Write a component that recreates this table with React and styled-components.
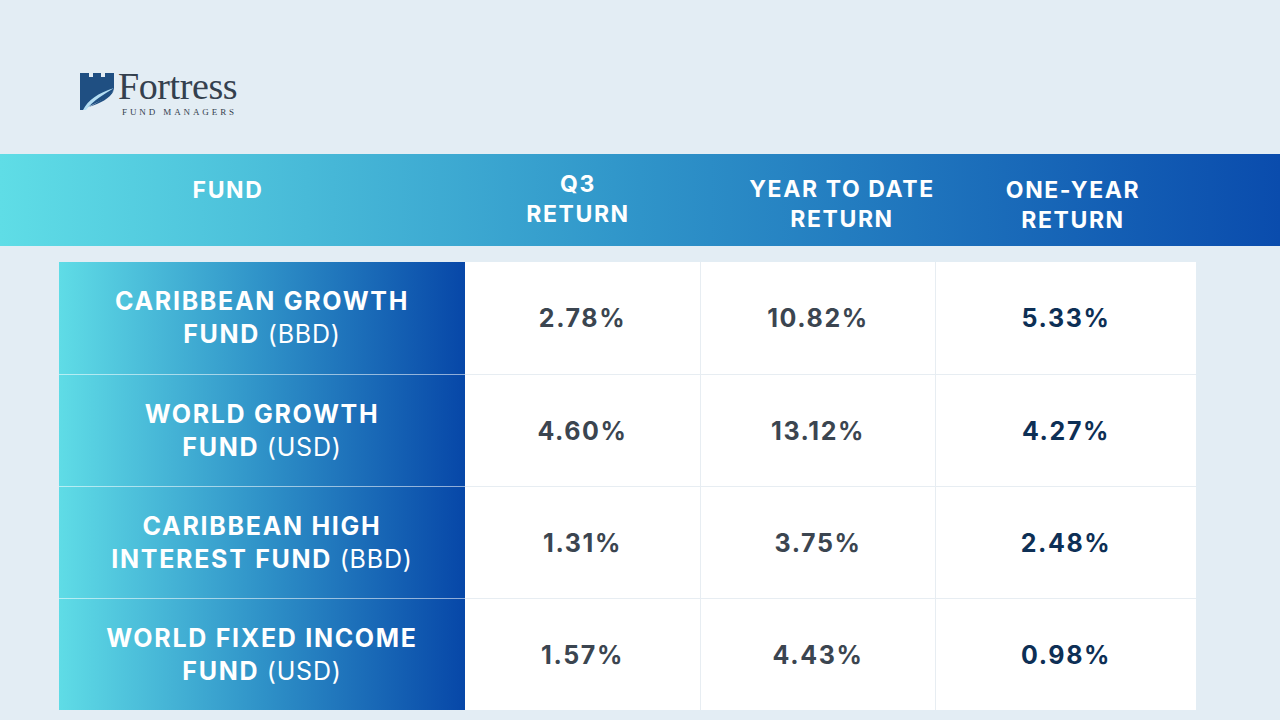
import React from 'react';
import styled, { createGlobalStyle } from 'styled-components';

const GlobalStyle = createGlobalStyle`
  html, body {
    margin: 0;
    padding: 0;
    background: #e3edf4;
    font-family: Inter, "Noto Sans", sans-serif;
  }
`;

const Page = styled.div`
  width: 1280px;
  height: 720px;
  overflow: hidden;
  background: #e3edf4;
  display: flex;
  flex-direction: column;
`;

const TopBar = styled.div`
  height: 154px;
  padding: 68px 0 0 80px;
  display: flex;
  align-items: flex-start;
  box-sizing: border-box;
`;

const Logo = styled.div`
  display: flex;
  align-items: flex-start;
  gap: 3px;
`;

const LogoIcon = styled.svg`
  margin-top: 5px;
  flex-shrink: 0;
`;

const LogoWords = styled.div`
  display: flex;
  flex-direction: column;
`;

const LogoName = styled.div`
  font-family: "Liberation Serif", "DejaVu Serif", serif;
  font-size: 38px;
  line-height: 36px;
  color: #34404e;
  letter-spacing: -0.4px;
`;

const LogoSub = styled.div`
  font-family: "Liberation Serif", serif;
  font-size: 9px;
  line-height: 10px;
  letter-spacing: 2.9px;
  color: #34404e;
  margin: 3px 0 0 4px;
`;

const HeaderBand = styled.div`
  height: 92px;
  background: linear-gradient(90deg, #5fdde6 0%, #2f94c9 50%, #0a4cad 100%);
  display: grid;
  grid-template-columns: 128px 200px 150px 200px 64px 200px 31px 200px;
  align-items: center;
`;

const HeadLabel = styled.div`
  grid-column: ${(p) => p.$col};
  text-align: center;
  color: #fff;
  font-family: Inter, "Liberation Sans", sans-serif;
  font-weight: 700;
  font-size: 23px;
  line-height: 30px;
  letter-spacing: 1.6px;
  white-space: nowrap;
  margin-top: ${(p) => p.$dy || 0}px;
`;

const Table = styled.div`
  margin: 16px 0 0 59px;
  width: 1137px;
  display: grid;
  grid-template-columns: 406px 235px 235px 261px;
  grid-auto-rows: 112px;
  background: #fff;
`;

const FundCell = styled.div`
  background: linear-gradient(90deg, #5fdce6 0%, #2f92c8 50%, #0747a8 100%);
  border-top: ${(p) => (p.$first ? 'none' : '1px solid rgba(255,255,255,0.55)')};
  display: flex;
  align-items: center;
  justify-content: center;
  text-align: center;
  color: #fff;
  font-size: 25px;
  line-height: 33px;
  letter-spacing: 1.7px;
  font-weight: 700;
`;

const Currency = styled.span`
  font-weight: 400;
  letter-spacing: 0.8px;
`;

const ValueCell = styled.div`
  border-top: ${(p) => (p.$first ? 'none' : '1px solid #e7edf2')};
  border-left: ${(p) => (p.$divider ? '1px solid #e7edf2' : 'none')};
  display: flex;
  align-items: center;
  justify-content: center;
  font-size: 25px;
  font-weight: 650;
  letter-spacing: 1.6px;
  color: ${(p) => (p.$dark ? '#0d2f55' : '#3b4550')};
`;

const funds = [
  { name: 'CARIBBEAN GROWTH', tail: 'FUND', cur: '(BBD)', q3: '2.78%', ytd: '10.82%', one: '5.33%' },
  { name: 'WORLD GROWTH', tail: 'FUND', cur: '(USD)', q3: '4.60%', ytd: '13.12%', one: '4.27%' },
  { name: 'CARIBBEAN HIGH', tail: 'INTEREST FUND', cur: '(BBD)', q3: '1.31%', ytd: '3.75%', one: '2.48%' },
  { name: 'WORLD FIXED INCOME', tail: 'FUND', cur: '(USD)', q3: '1.57%', ytd: '4.43%', one: '0.98%' },
];

const LogoMark = () => (
  <LogoIcon width="35" height="37" viewBox="0 0 35 37">
    <path
      d="M0 0 H9 V4 H13 V0 H21 V4 H25 V0 H34 V16 C30 24 22 27 14 31 C9 33 6 35 5 37 H0 Z"
      fill="#1f4f82"
    />
    <path d="M3 37 C8 27 18 20 34 15 C25 21 13 27 6 37 Z" fill="#b4def3" />
    <path d="M34 17 C30 26 20 30 9 34 C18 29 27 24 34 17 Z" fill="#1f4f82" />
  </LogoIcon>
);

export default function App() {
  return (
    <Page>
      <GlobalStyle />
      <TopBar>
        <Logo>
          <LogoMark />
          <LogoWords>
            <LogoName>Fortress</LogoName>
            <LogoSub>FUND MANAGERS</LogoSub>
          </LogoWords>
        </Logo>
      </TopBar>
      <HeaderBand>
        <HeadLabel $col={2} $dy={-20}>FUND</HeadLabel>
        <HeadLabel $col={4} $dy={-2}>
          Q3
          <br />
          RETURN
        </HeadLabel>
        <HeadLabel $col={6} $dy={8}>
          YEAR TO DATE
          <br />
          RETURN
        </HeadLabel>
        <HeadLabel $col={8} $dy={10}>
          ONE-YEAR
          <br />
          RETURN
        </HeadLabel>
      </HeaderBand>
      <Table>
        {funds.map((f, i) => (
          <React.Fragment key={f.name}>
            <FundCell $first={i === 0}>
              <div>
                {f.name}
                <br />
                {f.tail} <Currency>{f.cur}</Currency>
              </div>
            </FundCell>
            <ValueCell $first={i === 0}>{f.q3}</ValueCell>
            <ValueCell $first={i === 0} $divider>{f.ytd}</ValueCell>
            <ValueCell $first={i === 0} $divider $dark>{f.one}</ValueCell>
          </React.Fragment>
        ))}
      </Table>
    </Page>
  );
}
